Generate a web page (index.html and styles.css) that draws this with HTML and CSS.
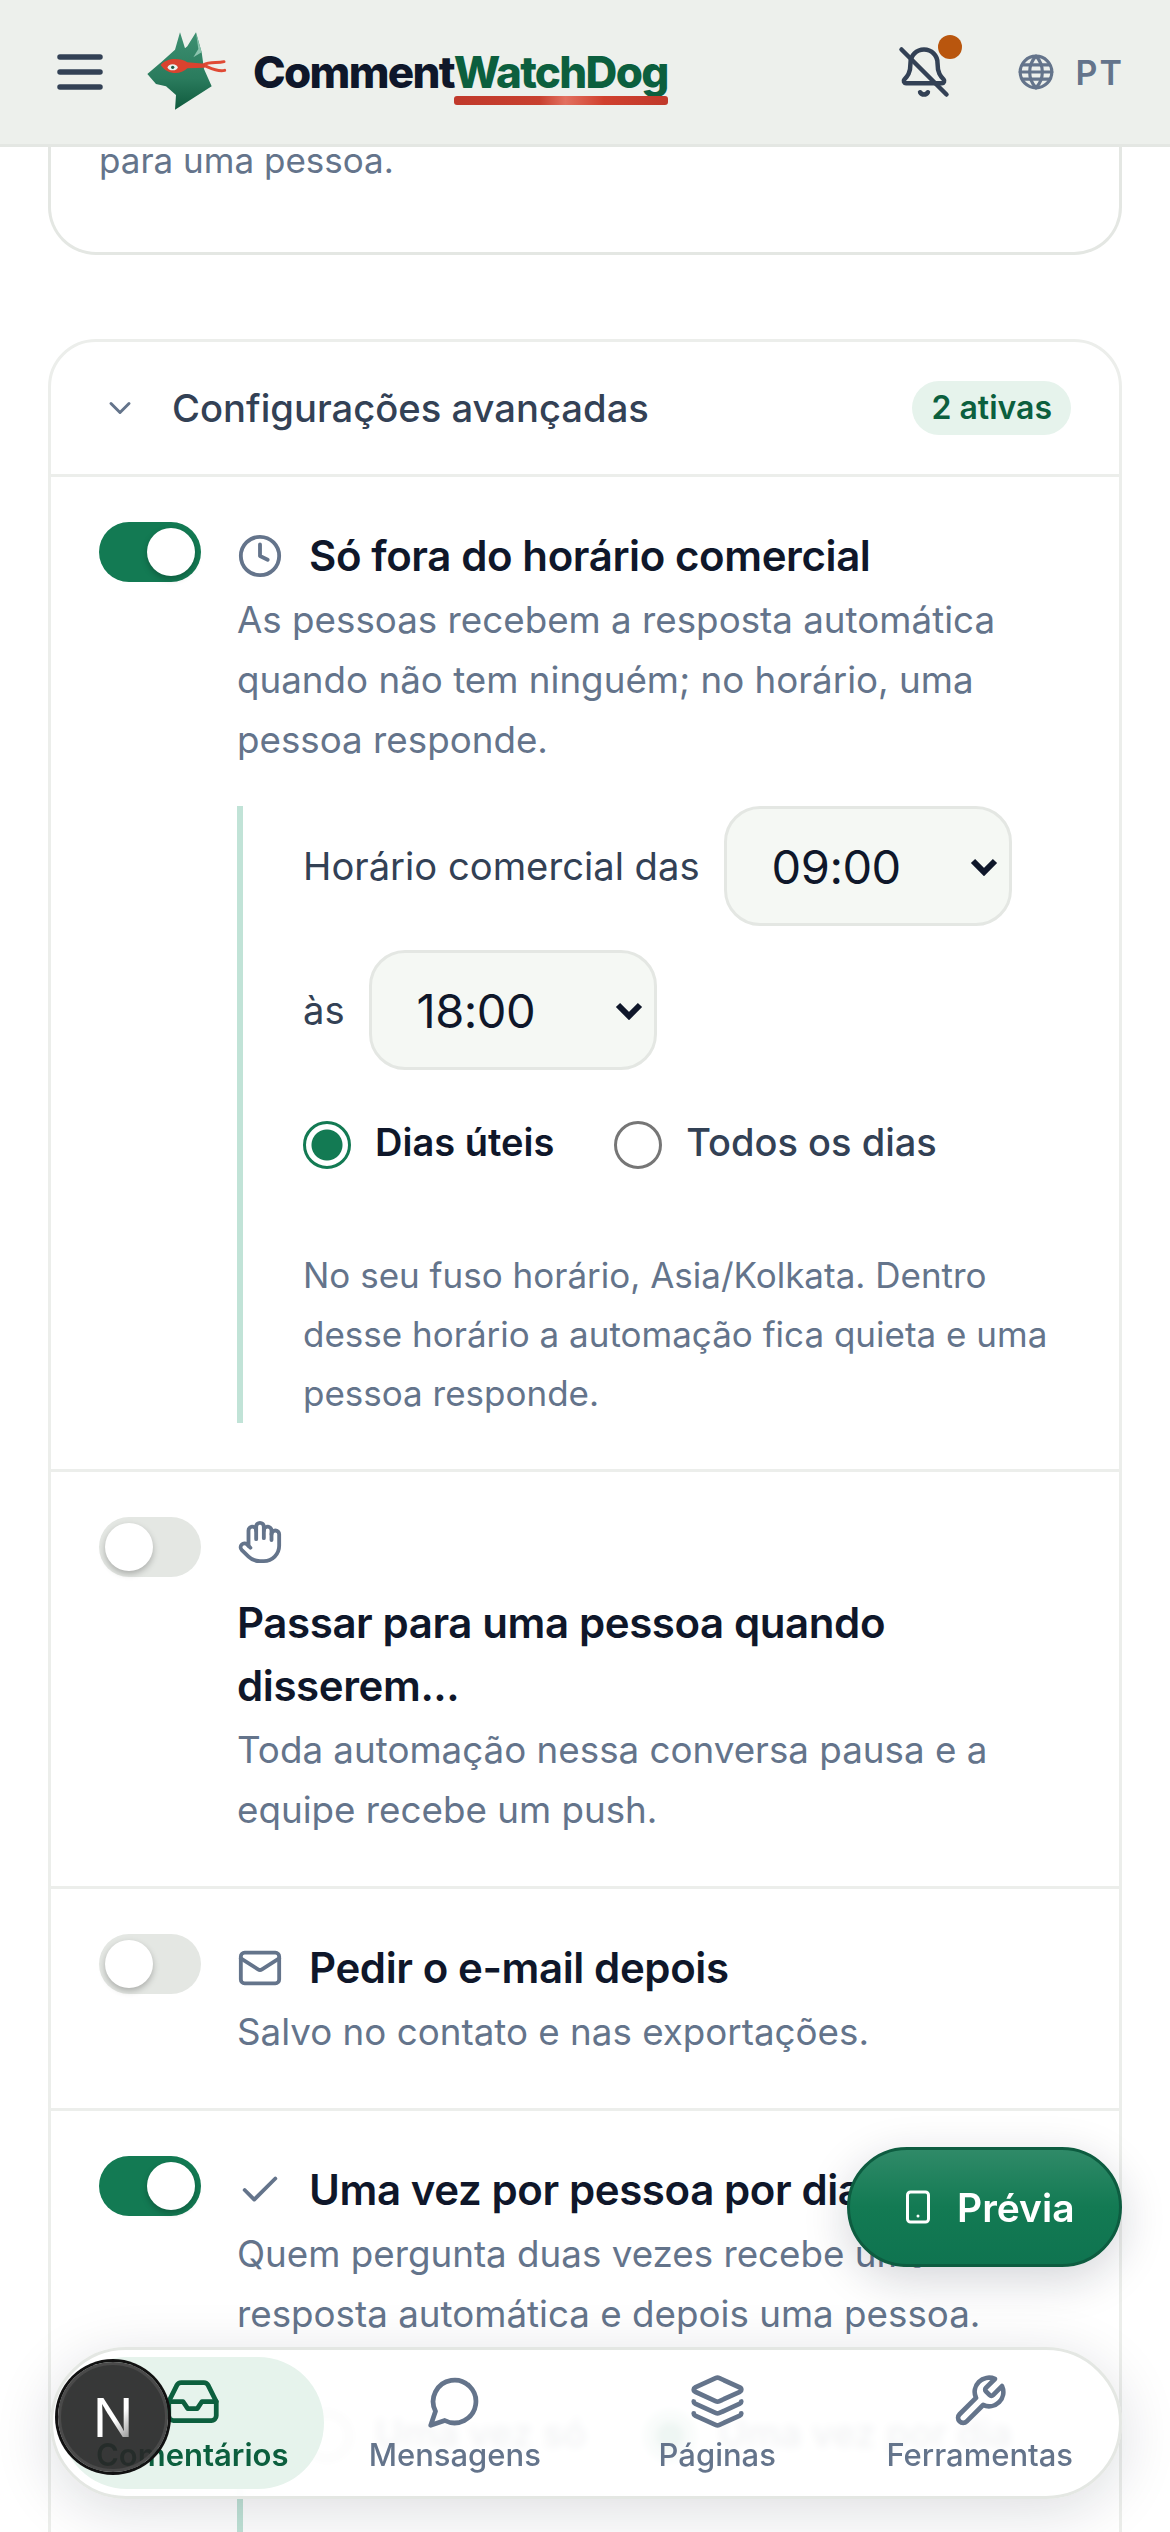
FILE: index.html
```html
<!DOCTYPE html>
<html lang="pt">
<head>
<meta charset="UTF-8">
<meta name="viewport" content="width=device-width, initial-scale=1.0">
<title>CommentWatchDog</title>
<link rel="stylesheet" href="styles.css">
</head>
<body>
  <header class="topbar">
    <svg class="icon menu-icon" viewBox="0 0 24 24"><path d="M4 6h16M4 12h16M4 18h16"/></svg>
    <svg class="dog" viewBox="0 0 390 330">
      <defs>
        <linearGradient id="dogFill" x1="0" y1="0" x2="0" y2="1">
          <stop offset="0" stop-color="#3d9071"/>
          <stop offset="0.6" stop-color="#2a7b5d"/>
          <stop offset="1" stop-color="#0f5a3d"/>
        </linearGradient>
      </defs>
      <path fill="url(#dogFill)" d="M52 195 L95 158 L135 122 L150 70 L165 118 L172 112 L198 70 L215 130 L222 180 L245 232 L135 302 L138 258 L108 232 L78 225 Z"/>
      <path fill="#8cc4ae" d="M198 72 L215 130 L190 145 L205 120 Z"/>
      <path fill="none" stroke="#e04a35" stroke-width="9" stroke-linecap="round" d="M220 168 C240 156 262 164 282 158 M220 168 C240 176 262 190 284 184"/>
      <path fill="#d9432f" d="M92 168 C110 146 150 146 172 160 L224 164 L224 176 L172 178 C150 200 110 196 92 168 Z"/>
      <ellipse cx="128" cy="175" rx="15" ry="9" fill="#e8f3ee"/>
      <circle cx="128" cy="175" r="5" fill="#1d5a45"/>
    </svg>
    <div class="wordmark">Comment<span class="wordmark-green">WatchDog</span></div>
    <div class="topbar-right">
      <div class="bell">
        <svg class="icon" viewBox="0 0 24 24"><path d="M3.262 15.326A1 1 0 0 0 4 17h16a1 1 0 0 0 .74-1.673C19.41 13.956 18 12.499 18 8A6 6 0 0 0 6 8c0 4.499-1.411 5.956-2.738 7.326"/><path d="M10.268 21a2 2 0 0 0 3.464 0"/><path d="m2 2 20 20"/></svg>
        <span class="bell-dot"></span>
      </div>
      <div class="lang">
        <svg class="icon" viewBox="0 0 24 24"><circle cx="12" cy="12" r="10"/><path d="M12 2a14.5 14.5 0 0 0 0 20 14.5 14.5 0 0 0 0-20"/><path d="M2 12h20M3.5 7.5h17M3.5 16.5h17"/></svg>
        <span>PT</span>
      </div>
    </div>
  </header>

  <main class="page">
    <section class="card card-cut">
      <p class="desc">para uma pessoa.</p>
    </section>

    <section class="card">
      <div class="card-head">
        <svg class="icon head-chevron" viewBox="0 0 24 24"><path d="m6 9 6 6 6-6"/></svg>
        <span class="card-title">Configurações avançadas</span>
        <span class="chip">2 ativas</span>
      </div>

      <div class="row">
        <span class="toggle on"></span>
        <div class="row-body">
          <div class="row-title">
            <svg class="icon row-icon" viewBox="0 0 24 24"><circle cx="12" cy="12" r="10"/><path d="M12 6v6l4 2"/></svg>
            <h3>Só fora do horário comercial</h3>
          </div>
          <p class="desc">As pessoas recebem a resposta automática quando não tem ninguém; no horário, uma pessoa responde.</p>
          <div class="panel">
            <div class="hours">
              <label>Horário comercial das</label>
              <div class="time-wrap">
                <select class="time"><option>09:00</option><option>10:00</option></select>
                <svg class="time-arrow" viewBox="0 0 28 18"><path d="M3 3l11 11L25 3"/></svg>
              </div>
              <label>às</label>
              <div class="time-wrap">
                <select class="time"><option>18:00</option><option>19:00</option></select>
                <svg class="time-arrow" viewBox="0 0 28 18"><path d="M3 3l11 11L25 3"/></svg>
              </div>
            </div>
            <div class="radios">
              <label class="radio selected"><input type="radio" name="days" checked>Dias úteis</label>
              <label class="radio"><input type="radio" name="days">Todos os dias</label>
            </div>
            <p class="note">No seu fuso horário, Asia/Kolkata. Dentro desse horário a automação fica quieta e uma pessoa responde.</p>
          </div>
        </div>
      </div>

      <div class="row">
        <span class="toggle"></span>
        <div class="row-body">
          <div class="row-title">
            <svg class="icon row-icon" viewBox="0 0 24 24"><path d="M18 11V6a2 2 0 0 0-2-2a2 2 0 0 0-2 2"/><path d="M14 10V4a2 2 0 0 0-2-2a2 2 0 0 0-2 2v2"/><path d="M10 10.5V6a2 2 0 0 0-2-2a2 2 0 0 0-2 2v8"/><path d="M18 8a2 2 0 1 1 4 0v6a8 8 0 0 1-8 8h-2c-2.8 0-4.5-.86-5.99-2.34l-3.6-3.6a2 2 0 0 1 2.83-2.82L7 15"/></svg>
            <h3>Passar para uma pessoa quando disserem...</h3>
          </div>
          <p class="desc">Toda automação nessa conversa pausa e a equipe recebe um push.</p>
        </div>
      </div>

      <div class="row">
        <span class="toggle"></span>
        <div class="row-body">
          <div class="row-title">
            <svg class="icon row-icon" viewBox="0 0 24 24"><rect x="2" y="4" width="20" height="16" rx="2"/><path d="m22 7-8.97 5.7a1.94 1.94 0 0 1-2.06 0L2 7"/></svg>
            <h3>Pedir o e-mail depois</h3>
          </div>
          <p class="desc">Salvo no contato e nas exportações.</p>
        </div>
      </div>

      <div class="row">
        <span class="toggle on"></span>
        <div class="row-body">
          <div class="row-title">
            <svg class="icon row-icon" viewBox="0 0 24 24"><path d="M20 6 9 17l-5-5"/></svg>
            <h3>Uma vez por pessoa por dia</h3>
          </div>
          <p class="desc">Quem pergunta duas vezes recebe uma resposta automática e depois uma pessoa.</p>
          <div class="panel panel-freq">
            <div class="radios">
              <label class="radio"><input type="radio" name="freq">Uma vez só</label>
              <label class="radio"><input type="radio" name="freq" checked>Uma vez por dia</label>
            </div>
          </div>
        </div>
      </div>
    </section>
  </main>

  <button class="preview">
    <svg class="icon" viewBox="0 0 24 24"><rect x="5" y="2" width="14" height="20" rx="2"/><path d="M12 18h.01"/></svg>
    Prévia
  </button>

  <nav class="bottom-nav">
    <a class="nav-item active">
      <svg class="icon" viewBox="0 0 24 24"><path d="M22 12h-6l-2 3h-4l-2-3H2"/><path d="M5.45 5.11 2 12v6a2 2 0 0 0 2 2h16a2 2 0 0 0 2-2v-6l-3.45-6.89A2 2 0 0 0 16.76 4H7.24a2 2 0 0 0-1.79 1.11z"/></svg>
      Comentários
    </a>
    <a class="nav-item">
      <svg class="icon" viewBox="0 0 24 24"><path d="M7.9 20A9 9 0 1 0 4 16.1L2 22Z"/></svg>
      Mensagens
    </a>
    <a class="nav-item">
      <svg class="icon" viewBox="0 0 24 24"><path d="M12.83 2.18a2 2 0 0 0-1.66 0L2.6 6.08a1 1 0 0 0 0 1.83l8.58 3.91a2 2 0 0 0 1.66 0l8.58-3.9a1 1 0 0 0 0-1.83z"/><path d="M2 12a1 1 0 0 0 .58.91l8.6 3.91a2 2 0 0 0 1.65 0l8.58-3.9A1 1 0 0 0 22 12"/><path d="M2 17a1 1 0 0 0 .58.91l8.6 3.91a2 2 0 0 0 1.65 0l8.58-3.9A1 1 0 0 0 22 17"/></svg>
      Páginas
    </a>
    <a class="nav-item">
      <svg class="icon" viewBox="0 0 24 24"><path d="M14.7 6.3a1 1 0 0 0 0 1.4l1.6 1.6a1 1 0 0 0 1.4 0l3.77-3.77a6 6 0 0 1-7.94 7.94l-6.91 6.91a2.12 2.12 0 0 1-3-3l6.91-6.91a6 6 0 0 1 7.94-7.94l-3.76 3.76z"/></svg>
      Ferramentas
    </a>
  </nav>

  <div class="dev-badge"><span>N</span></div>
</body>
</html>
```

FILE: styles.css
```css
* {
  box-sizing: border-box;
}
html, body {
  height: 2532px;
  overflow: hidden;
}
body {
  margin: 0;
  background: #fff;
  font-family: 'Inter', sans-serif;
  color: #0f172a;
}
.icon {
  display: block;
  flex: none;
  fill: none;
  stroke: currentColor;
  stroke-width: 2;
  stroke-linecap: round;
  stroke-linejoin: round;
}

/* top bar */
.topbar {
  display: flex;
  align-items: center;
  height: 147px;
  padding: 0 46px 0 50px;
  background: #edf0ec;
  border-bottom: 3px solid #e4e7e3;
}
.menu-icon {
  width: 60px;
  height: 60px;
  color: #334155;
  stroke-width: 2.2;
}
.dog {
  flex: none;
  width: 130px;
  height: 110px;
  margin: 0 0 16px 20px;
}
.wordmark {
  margin-left: -7px;
  font-size: 44px;
  font-weight: 800;
  letter-spacing: -1.7px;
  color: #0f172a;
}
.wordmark-green {
  position: relative;
  color: #0c5f3e;
}
.wordmark-green::after {
  content: "";
  position: absolute;
  left: 0;
  right: 0;
  bottom: -6px;
  height: 9px;
  border-radius: 3px;
  background: linear-gradient(to right, #c0392b, #c8402f 40%, #e2705f 52%, #d0402e 70%, #c0392b);
}
.topbar-right {
  display: flex;
  align-items: center;
  gap: 66px;
  margin-left: auto;
}
.bell {
  position: relative;
  color: #334155;
}
.bell .icon {
  width: 54px;
  height: 54px;
}
.bell-dot {
  position: absolute;
  top: -10px;
  right: -11px;
  width: 24px;
  height: 24px;
  border-radius: 50%;
  background: #b9560e;
}
.lang {
  display: flex;
  align-items: center;
  gap: 21px;
  font-size: 34px;
  font-weight: 600;
  letter-spacing: 2px;
  color: #64748b;
}
.lang .icon {
  width: 38px;
  height: 38px;
}

/* cards */
.page {
  height: 2385px;
  padding: 0 48px;
  overflow: hidden;
}
.card {
  margin-bottom: 84px;
  background: #fff;
  border: 3px solid #eceeeb;
  border-radius: 48px;
  overflow: hidden;
}
.card-cut {
  height: 108px;
  padding: 0 48px;
  border-color: #e4e7e3;
  border-top: none;
  border-radius: 0 0 48px 48px;
  overflow: visible;
}
.desc {
  margin: 3px 0 0;
  font-size: 36.75px;
  line-height: 60px;
  color: #64748b;
}
.card-cut .desc {
  margin-top: 0;
  font-size: 35px;
  line-height: 26px;
}
.card-head {
  display: flex;
  align-items: center;
  height: 132px;
  padding: 0 48px 0 51px;
  color: #334155;
}
.head-chevron {
  width: 36px;
  height: 36px;
  color: #64748b;
  margin-right: 34px;
}
.card-title {
  font-size: 38.2px;
  font-weight: 500;
}
.chip {
  margin-left: auto;
  padding: 0 19px;
  height: 54px;
  line-height: 54px;
  border-radius: 27px;
  background: #e6f3ec;
  color: #0c5f3e;
  font-size: 32px;
  font-weight: 600;
}

.row {
  display: flex;
  gap: 36px;
  padding: 45px 48px 46px;
  border-top: 3px solid #eceeeb;
}
.toggle {
  flex: none;
  display: flex;
  align-items: center;
  width: 102px;
  height: 60px;
  padding: 0 6px;
  border-radius: 30px;
  background: #e4e7e3;
}
.toggle::after {
  content: "";
  width: 48px;
  height: 48px;
  border-radius: 50%;
  background: #fff;
  box-shadow: 0 3px 6px rgba(0, 0, 0, 0.25);
}
.toggle.on {
  justify-content: flex-end;
  background: #137a53;
}
.row-body {
  flex: 1;
  min-width: 0;
}
.row-title {
  display: flex;
  flex-wrap: wrap;
  align-items: center;
  gap: 26px 26px;
  padding-top: 2px;
}
.row-icon {
  width: 46px;
  height: 46px;
  color: #64748b;
}
.row-title h3 {
  margin: 0;
  font-size: 42px;
  line-height: 63px;
  font-weight: 600;
  letter-spacing: -0.4px;
}

/* sub panel */
.panel {
  margin-top: 36px;
  padding: 0 0 0 60px;
  border-left: 6px solid #c1e3d7;
}
.panel-freq {
  min-height: 400px;
}
.panel-freq .radios {
  margin-top: 0;
  padding-top: 26px;
}
.hours {
  display: flex;
  flex-wrap: wrap;
  align-items: center;
  gap: 24px;
  font-size: 38.2px;
  color: #334155;
}
.time-wrap {
  position: relative;
}
.time {
  display: block;
  width: 288px;
  height: 120px;
  padding: 0 24px 0 45px;
  appearance: none;
  font-family: 'Inter', sans-serif;
  font-size: 47px;
  letter-spacing: -0.5px;
  color: #0f172a;
  background-color: #f5f8f4;
  border: 3px solid #e4e7e3;
  border-radius: 36px;
}
.time-arrow {
  position: absolute;
  right: 14px;
  top: 52px;
  width: 28px;
  height: 18px;
  fill: none;
  stroke: #0f172a;
  stroke-width: 6;
  pointer-events: none;
}
.radios {
  display: flex;
  gap: 60px;
  margin-top: 45px;
}
.radio {
  display: flex;
  align-items: center;
  gap: 24px;
  font-size: 38px;
  font-weight: 500;
  color: #334155;
}
.radio input {
  appearance: none;
  width: 48px;
  height: 48px;
  margin: 6px 0 0;
  border: 3px solid #767676;
  border-radius: 50%;
  background: #fff;
}
.radio input:checked {
  border-color: #137a53;
  background: radial-gradient(circle, #137a53 0 15px, #fff 16px);
}
.radio.selected {
  font-weight: 600;
  color: #0f172a;
}
.note {
  margin: 77px 0 0;
  font-size: 35px;
  line-height: 59px;
  color: #64748b;
}

/* floating things */
.preview {
  position: fixed;
  left: 847px;
  top: 2147px;
  display: flex;
  align-items: center;
  gap: 21px;
  width: 275px;
  height: 120px;
  padding: 0 0 0 50px;
  border: 3px solid #0d5c40;
  border-radius: 60px;
  background: linear-gradient(to bottom, #2f8a68, #137a53 50%, #0f7450);
  color: #fff;
  font-family: 'Inter', sans-serif;
  font-size: 39px;
  font-weight: 600;
  box-shadow: 0 12px 45px rgba(15, 23, 42, 0.18);
}
.preview .icon {
  width: 36px;
  height: 36px;
}
.bottom-nav {
  position: fixed;
  left: 50px;
  right: 48px;
  top: 2347px;
  display: flex;
  align-items: center;
  height: 152px;
  padding: 0 8px;
  background: rgba(255, 255, 255, 0.93);
  backdrop-filter: blur(4px);
  border: 3px solid #e4e7e3;
  border-radius: 76px;
  box-shadow: 0 12px 60px rgba(15, 23, 42, 0.14);
}
.nav-item {
  flex: 1;
  display: flex;
  flex-direction: column;
  align-items: center;
  justify-content: center;
  gap: 6px;
  height: 132px;
  border-radius: 66px;
  font-size: 31px;
  font-weight: 500;
  color: #64748b;
}
.nav-item .icon {
  width: 57px;
  height: 57px;
}
.nav-item.active {
  background: #e6f3ec;
  color: #0c5f3e;
  font-weight: 600;
}
.dev-badge {
  position: fixed;
  left: 58px;
  top: 2362px;
  display: flex;
  align-items: center;
  justify-content: center;
  width: 110px;
  height: 110px;
  border-radius: 50%;
  background: rgba(40, 40, 40, 0.92);
  border: 3px solid #4a4a4a;
  box-shadow: 0 0 0 3px #111;
}
.dev-badge span {
  font-size: 54px;
  font-weight: 400;
  background: linear-gradient(135deg, #fff 55%, rgba(255, 255, 255, 0.2));
  -webkit-background-clip: text;
  background-clip: text;
  color: transparent;
}
```
